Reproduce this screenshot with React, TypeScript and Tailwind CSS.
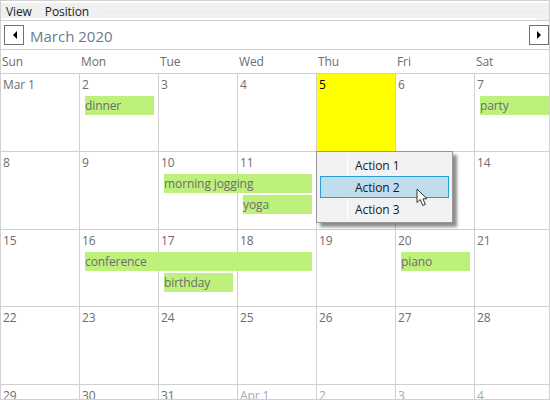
import { Fragment } from 'react'

type CalEvent = {
  title: string
  className: string
}

type Week = {
  heightClass: string
  days: { label: string; muted?: boolean; today?: boolean }[]
  events: CalEvent[]
}

const dayNames = ['Sun', 'Mon', 'Tue', 'Wed', 'Thu', 'Fri', 'Sat']

const colStart = [
  'col-start-1',
  'col-start-2',
  'col-start-3',
  'col-start-4',
  'col-start-5',
  'col-start-6',
  'col-start-7',
]

const toDays = (labels: string[]) => labels.map((label) => ({ label }))

const weeks: Week[] = [
  {
    heightClass: 'h-[78px]',
    days: [
      { label: 'Mar 1' },
      { label: '2' },
      { label: '3' },
      { label: '4' },
      { label: '5', today: true },
      { label: '6' },
      { label: '7' },
    ],
    events: [
      { title: 'dinner', className: 'col-start-2 row-start-2 mr-[5px]' },
      { title: 'party', className: 'col-start-7 row-start-2' },
    ],
  },
  {
    heightClass: 'h-[78px]',
    days: toDays(['8', '9', '10', '11', '12', '13', '14']),
    events: [
      { title: 'morning jogging', className: 'col-start-3 col-span-2 row-start-2 mr-[5px]' },
      { title: 'yoga', className: 'col-start-4 row-start-3 mr-[5px]' },
    ],
  },
  {
    heightClass: 'h-[77px]',
    days: toDays(['15', '16', '17', '18', '19', '20', '21']),
    events: [
      { title: 'conference', className: 'col-start-2 col-span-3 row-start-2 mr-[5px]' },
      { title: 'birthday', className: 'col-start-3 row-start-3 mr-[5px]' },
      { title: 'piano', className: 'col-start-6 row-start-2 mr-[5px]' },
    ],
  },
  {
    heightClass: 'h-[78px]',
    days: toDays(['22', '23', '24', '25', '26', '27', '28']),
    events: [],
  },
  {
    heightClass: 'h-[78px]',
    days: [
      { label: '29' },
      { label: '30' },
      { label: '31' },
      { label: 'Apr 1', muted: true },
      { label: '2', muted: true },
      { label: '3', muted: true },
      { label: '4', muted: true },
    ],
    events: [],
  },
]

function ArrowButton({ direction }: { direction: 'left' | 'right' }) {
  return (
    <button
      type="button"
      className="flex h-[20px] w-[20px] items-center justify-center border border-[#707070] bg-white"
    >
      <svg width="5" height="8" viewBox="0 0 5 8">
        <path d={direction === 'left' ? 'M5 0V8L1 4Z' : 'M0 0V8L4 4Z'} fill="#000" />
      </svg>
    </button>
  )
}

function ContextMenu() {
  return (
    <div className="absolute left-[315px] top-[150px] z-10 h-[72px] w-[137px] border border-[#979797] bg-[#f2f2f2] p-[2px] shadow-[4px_4px_3px_rgba(0,0,0,0.45)]">
      <div className="absolute bottom-[2px] left-[30px] top-[2px] w-px bg-white" />
      {['Action 1', 'Action 2', 'Action 3'].map((label, i) => (
        <div
          key={label}
          className={
            i === 1
              ? 'relative mx-[1px] flex h-[22px] items-center border border-[#26a0da] bg-[#c0dced] pl-[34px] pt-[1px] text-[#1a1a1a]'
              : 'relative mx-[1px] flex h-[22px] items-center pl-[35px] pt-[1px] text-[#1a1a1a]'
          }
        >
          {label}
        </div>
      ))}
      <svg
        className="absolute left-[99px] top-[36px]"
        width="14"
        height="19"
        viewBox="0 0 14 19"
      >
        <path
          d="M1 1V14.5L4.2 11.5L6.8 17.5L9.4 16.4L6.9 10.8H11Z"
          fill="#fff"
          stroke="#333"
          strokeWidth="1"
        />
      </svg>
    </div>
  )
}

export default function App() {
  return (
    <div className="relative flex h-[400px] w-[550px] flex-col overflow-hidden border border-[#d0d0d0] bg-white font-['Open_Sans','Noto_Sans',sans-serif] text-[12px] leading-[16px] tracking-[-0.1px] text-[#6d6d6d]">
      <div className="flex h-[17px] shrink-0 items-center gap-[13px] border-t-2 border-white bg-[#f0f0f0] pl-[5px] pt-[3px] text-[#222]">
        <span>View</span>
        <span>Position</span>
        <div className="mb-[2px] mr-[4px] flex-1 border-t border-dotted border-[#e2e2e2]" />
      </div>
      <div className="flex h-[2px] shrink-0 justify-end">
        <div className="w-[12px] bg-[#f0f0f0]" />
      </div>

      <div className="flex h-[30px] shrink-0 items-center border-y border-[#d0d0d0] pl-[3px]">
        <ArrowButton direction="left" />
        <span className="ml-[6px] mt-[1px] text-[15px] tracking-normal text-[#6b7a8c]">March 2020</span>
        <div className="ml-auto">
          <ArrowButton direction="right" />
        </div>
      </div>

      <div className="grid h-[24px] shrink-0 grid-cols-[repeat(6,79px)_1fr] items-center border-b border-[#d0d0d0]">
        {dayNames.map((name) => (
          <div key={name} className="pl-[1px] text-[#6d6d6d]">
            {name}
          </div>
        ))}
      </div>

      {weeks.map((week, w) => (
        <div
          key={w}
          className={`${week.heightClass} grid shrink-0 grid-cols-[repeat(6,79px)_1fr] grid-rows-[22px_21px_21px_1fr] border-b border-[#d0d0d0]`}
        >
          {week.days.map((day, d) => (
            <Fragment key={d}>
              <div
                className={`${colStart[d]} row-start-1 row-span-4 ${d < 6 ? 'border-r border-[#d0d0d0]' : ''} ${
                  day.today ? 'bg-[#ffff00]' : ''
                }`}
              />
              <div
                className={`${colStart[d]} row-start-1 pl-[2px] pt-[3px] ${
                  day.today ? 'text-black' : day.muted ? 'text-[#a3a9b0]' : ''
                }`}
              >
                {day.label}
              </div>
            </Fragment>
          ))}
          {week.events.map((ev) => (
            <div
              key={ev.title}
              className={`${ev.className} z-[1] ml-[5px] flex h-[19px] items-center bg-[#bef07c] pt-[1px] text-[#6d6d6d]`}
            >
              {ev.title}
            </div>
          ))}
        </div>
      ))}

      <ContextMenu />
    </div>
  )
}
